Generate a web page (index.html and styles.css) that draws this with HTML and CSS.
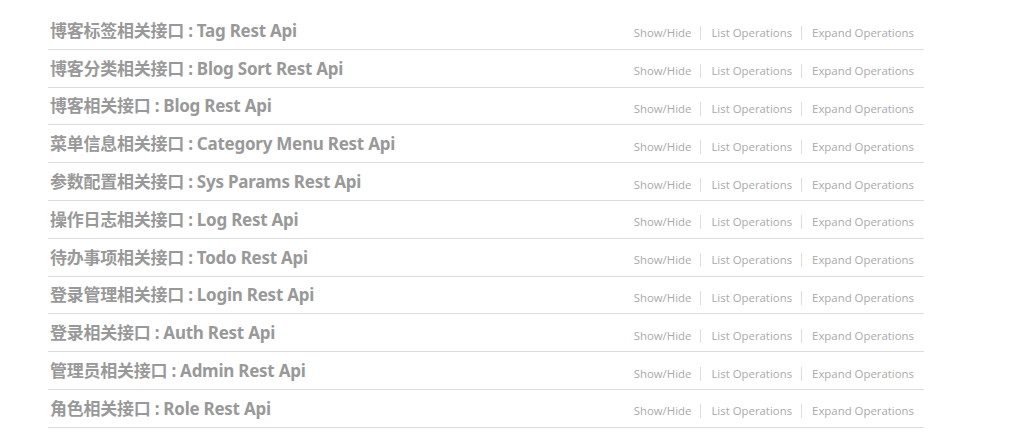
FILE: index.html
```html
<!DOCTYPE html>
<html lang="zh">
<head>
<meta charset="utf-8">
<title>Resources</title>
<link rel="stylesheet" href="styles.css">
</head>
<body>
<ul class="resources">
  <li class="resource"><h2 class="title">博客标签相关接口 : Tag Rest Api</h2><ul class="options"><li>Show/Hide</li><li>List Operations</li><li>Expand Operations</li></ul></li>
  <li class="resource"><h2 class="title">博客分类相关接口 : Blog Sort Rest Api</h2><ul class="options"><li>Show/Hide</li><li>List Operations</li><li>Expand Operations</li></ul></li>
  <li class="resource"><h2 class="title">博客相关接口 : Blog Rest Api</h2><ul class="options"><li>Show/Hide</li><li>List Operations</li><li>Expand Operations</li></ul></li>
  <li class="resource"><h2 class="title">菜单信息相关接口 : Category Menu Rest Api</h2><ul class="options"><li>Show/Hide</li><li>List Operations</li><li>Expand Operations</li></ul></li>
  <li class="resource"><h2 class="title">参数配置相关接口 : Sys Params Rest Api</h2><ul class="options"><li>Show/Hide</li><li>List Operations</li><li>Expand Operations</li></ul></li>
  <li class="resource"><h2 class="title">操作日志相关接口 : Log Rest Api</h2><ul class="options"><li>Show/Hide</li><li>List Operations</li><li>Expand Operations</li></ul></li>
  <li class="resource"><h2 class="title">待办事项相关接口 : Todo Rest Api</h2><ul class="options"><li>Show/Hide</li><li>List Operations</li><li>Expand Operations</li></ul></li>
  <li class="resource"><h2 class="title">登录管理相关接口 : Login Rest Api</h2><ul class="options"><li>Show/Hide</li><li>List Operations</li><li>Expand Operations</li></ul></li>
  <li class="resource"><h2 class="title">登录相关接口 : Auth Rest Api</h2><ul class="options"><li>Show/Hide</li><li>List Operations</li><li>Expand Operations</li></ul></li>
  <li class="resource"><h2 class="title">管理员相关接口 : Admin Rest Api</h2><ul class="options"><li>Show/Hide</li><li>List Operations</li><li>Expand Operations</li></ul></li>
  <li class="resource"><h2 class="title">角色相关接口 : Role Rest Api</h2><ul class="options"><li>Show/Hide</li><li>List Operations</li><li>Expand Operations</li></ul></li>
</ul>
</body>
</html>
```
FILE: styles.css
```css
html, body {
  margin: 0;
  padding: 0;
  background: #fff;
}
.resources {
  list-style: none;
  margin: 12px 0 0 48px;
  padding: 0;
  width: 876px;
}
.resource {
  display: flex;
  align-items: center;
  justify-content: space-between;
  height: 36.8px;
  border-bottom: 1px solid #ddd;
}
.title {
  margin: 0;
  padding-left: 2px;
  font-family: "Noto Sans", "Noto Sans CJK SC", sans-serif;
  font-weight: bold;
  font-size: 17px;
  letter-spacing: -0.25px;
  color: #999;
  position: relative;
  top: -1px;
}
.options {
  list-style: none;
  margin: 0 10px 0 0;
  padding: 0;
  display: flex;
  font-family: "Open Sans", sans-serif;
  font-size: 11.4px;
  color: #aaa;
  position: relative;
  top: 3px;
}
.options li {
  padding: 0 9px 0 10px;
  line-height: 14px;
  border-right: 1px solid #ddd;
}
.options li:last-child {
  border-right: none;
  padding-right: 0;
}
```
